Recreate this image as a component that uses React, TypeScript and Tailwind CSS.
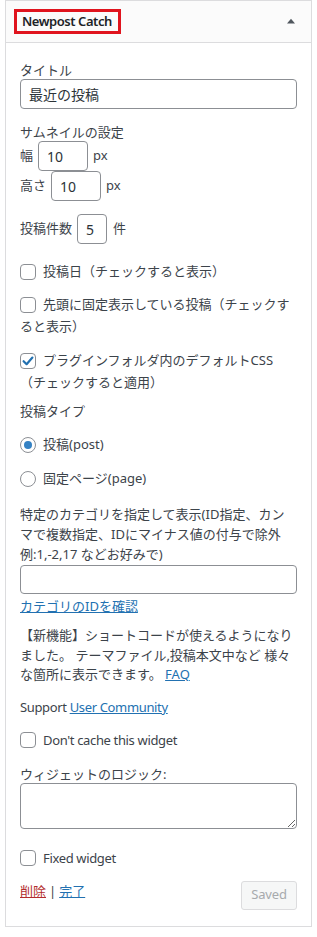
import React from "react";

const FONT = { fontFamily: '"Noto Sans", "Noto Sans CJK JP", sans-serif' };

function Checkbox({ checked = false }: { checked?: boolean }) {
  return (
    <span className="relative -top-[1px] mr-[7px] inline-block h-4 w-4 rounded-[4px] border border-[#8c8f94] bg-white align-middle">
      {checked && (
        <svg viewBox="0 0 16 16" className="absolute -left-[1px] -top-[1px] h-4 w-4">
          <path d="M3.6 8.2 L6.6 11.2 L12.4 4.6" fill="none" stroke="#2271b1" strokeWidth="2.2" strokeLinecap="round" strokeLinejoin="round" />
        </svg>
      )}
    </span>
  );
}

function Radio({ checked = false }: { checked?: boolean }) {
  return (
    <span className="relative -top-[1px] mr-[7px] inline-flex h-4 w-4 items-center justify-center rounded-full border border-[#8c8f94] bg-white align-middle">
      {checked && <span className="block h-2 w-2 rounded-full bg-[#3582c4]" />}
    </span>
  );
}

function TextInput({ value, className }: { value: string; className: string }) {
  return (
    <input
      readOnly
      value={value}
      style={FONT}
      className={`rounded-[4px] border border-[#8c8f94] bg-white px-[8px] text-[14px] text-[#2c3338] outline-none ${className}`}
    />
  );
}

export default function App() {
  return (
    <div className="min-h-[937px] w-full bg-white text-[13px] text-[#3c434a]" style={FONT}>
      <div className="ml-[5px] w-[307px] border border-[#dcdcde] bg-white">
        {/* Header */}
        <div className="flex h-[42px] items-center justify-between border-b border-[#dcdcde] bg-[#fbfbfb] pl-[8px] pr-[15px]">
          <div className="flex h-[25px] w-[107px] items-center border-[3px] border-[#e0141e] pl-[5px]">
            <span className="whitespace-nowrap text-[13px] font-semibold leading-none tracking-[-0.45px] text-[#1d2327]">Newpost Catch</span>
          </div>
          <svg width="10" height="6" viewBox="0 0 10 6" className="mt-[-1px]">
            <path d="M1 5.5 L5 0.8 L9 5.5 Z" fill="#50575e" />
          </svg>
        </div>

        {/* Body */}
        <div className="flex flex-col px-[14px] pb-[16px] pt-[18px]">
          <div className="leading-[18px]">タイトル</div>
          <TextInput value="最近の投稿" className="h-[30px] w-full" />

          <div className="mt-[14px] leading-[18px]">サムネイルの設定</div>
          <div className="flex h-[30px] items-center">
            <span className="mr-[5px]">幅</span>
            <TextInput value="10" className="h-[30px] w-[50px]" />
            <span className="ml-[5px]">px</span>
          </div>
          <div className="flex h-[30px] items-center">
            <span className="mr-[5px]">高さ</span>
            <TextInput value="10" className="h-[30px] w-[50px]" />
            <span className="ml-[5px]">px</span>
          </div>

          <div className="mt-[13px] flex h-[30px] items-center">
            <span className="mr-[5px]">投稿件数</span>
            <TextInput value="5" className="h-[30px] w-[30px]" />
            <span className="ml-[6px]">件</span>
          </div>

          <div className="mt-[16px] whitespace-nowrap leading-[22px]">
            <Checkbox />
            投稿日（チェックすると表示）
          </div>

          <div className="mt-[11px] whitespace-nowrap leading-[22px]">
            <Checkbox />
            先頭に固定表示している投稿（チェックす
            <br />
            ると表示）
          </div>

          <div className="mt-[12px] whitespace-nowrap leading-[22px]">
            <Checkbox checked />
            プラグインフォルダ内のデフォルトCSS
            <br />
            （チェックすると適用）
          </div>

          <div className="mt-[9px] leading-[18px]">投稿タイプ</div>

          <div className="mt-[13px] whitespace-nowrap leading-[22px]">
            <Radio checked />
            投稿(post)
          </div>
          <div className="mt-[12px] whitespace-nowrap leading-[22px]">
            <Radio />
            固定ページ(page)
          </div>

          <div className="mt-[15px] whitespace-nowrap leading-[20px]">
            特定のカテゴリを指定して表示(ID指定、カン
            <br />
            マで複数指定、IDにマイナス値の付与で除外
            <br />
            例:1,-2,17 などお好みで)
          </div>
          <TextInput value="" className="mt-[1px] h-[29px] w-full" />
          <div className="mt-[3px] leading-[18px]">
            <a className="text-[#2271b1] underline">カテゴリのIDを確認</a>
          </div>

          <div className="mt-[11px] whitespace-nowrap leading-[19.5px]">
            【新機能】ショートコードが使えるようになり
            <br />
            ました。 テーマファイル,投稿本文中など 様々
            <br />
            な箇所に表示できます。 <a className="text-[#2271b1] underline">FAQ</a>
          </div>

          <div className="mt-[13px] leading-[18px] tracking-[-0.35px]">
            Support <a className="text-[#2271b1] underline">User Community</a>
          </div>

          <div className="mt-[13px] whitespace-nowrap leading-[22px] tracking-[-0.35px]">
            <Checkbox />
            Don't cache this widget
          </div>

          <div className="mt-[14px] leading-[18px]">ウィジェットのロジック:</div>
          <textarea
            readOnly
            className="block h-[46px] w-full rounded-[4px] border border-[#8c8f94] bg-white outline-none"
          />

          <div className="mt-[18px] whitespace-nowrap leading-[22px] tracking-[-0.35px]">
            <Checkbox />
            Fixed widget
          </div>

          <div className="mt-[12px] flex items-start justify-between">
            <div className="mt-[1px] leading-[18px]">
              <a className="text-[#b32d2e] underline">削除</a>
              <span className="mx-[3px]">|</span>
              <a className="text-[#2271b1] underline">完了</a>
            </div>
            <button
              disabled
              className="h-[29px] w-[56px] rounded-[3px] border border-[#dcdcde] bg-[#f6f7f7] text-[13px] tracking-[-0.2px] text-[#a7aaad]"
              style={FONT}
            >
              Saved
            </button>
          </div>
        </div>
      </div>
    </div>
  );
}
